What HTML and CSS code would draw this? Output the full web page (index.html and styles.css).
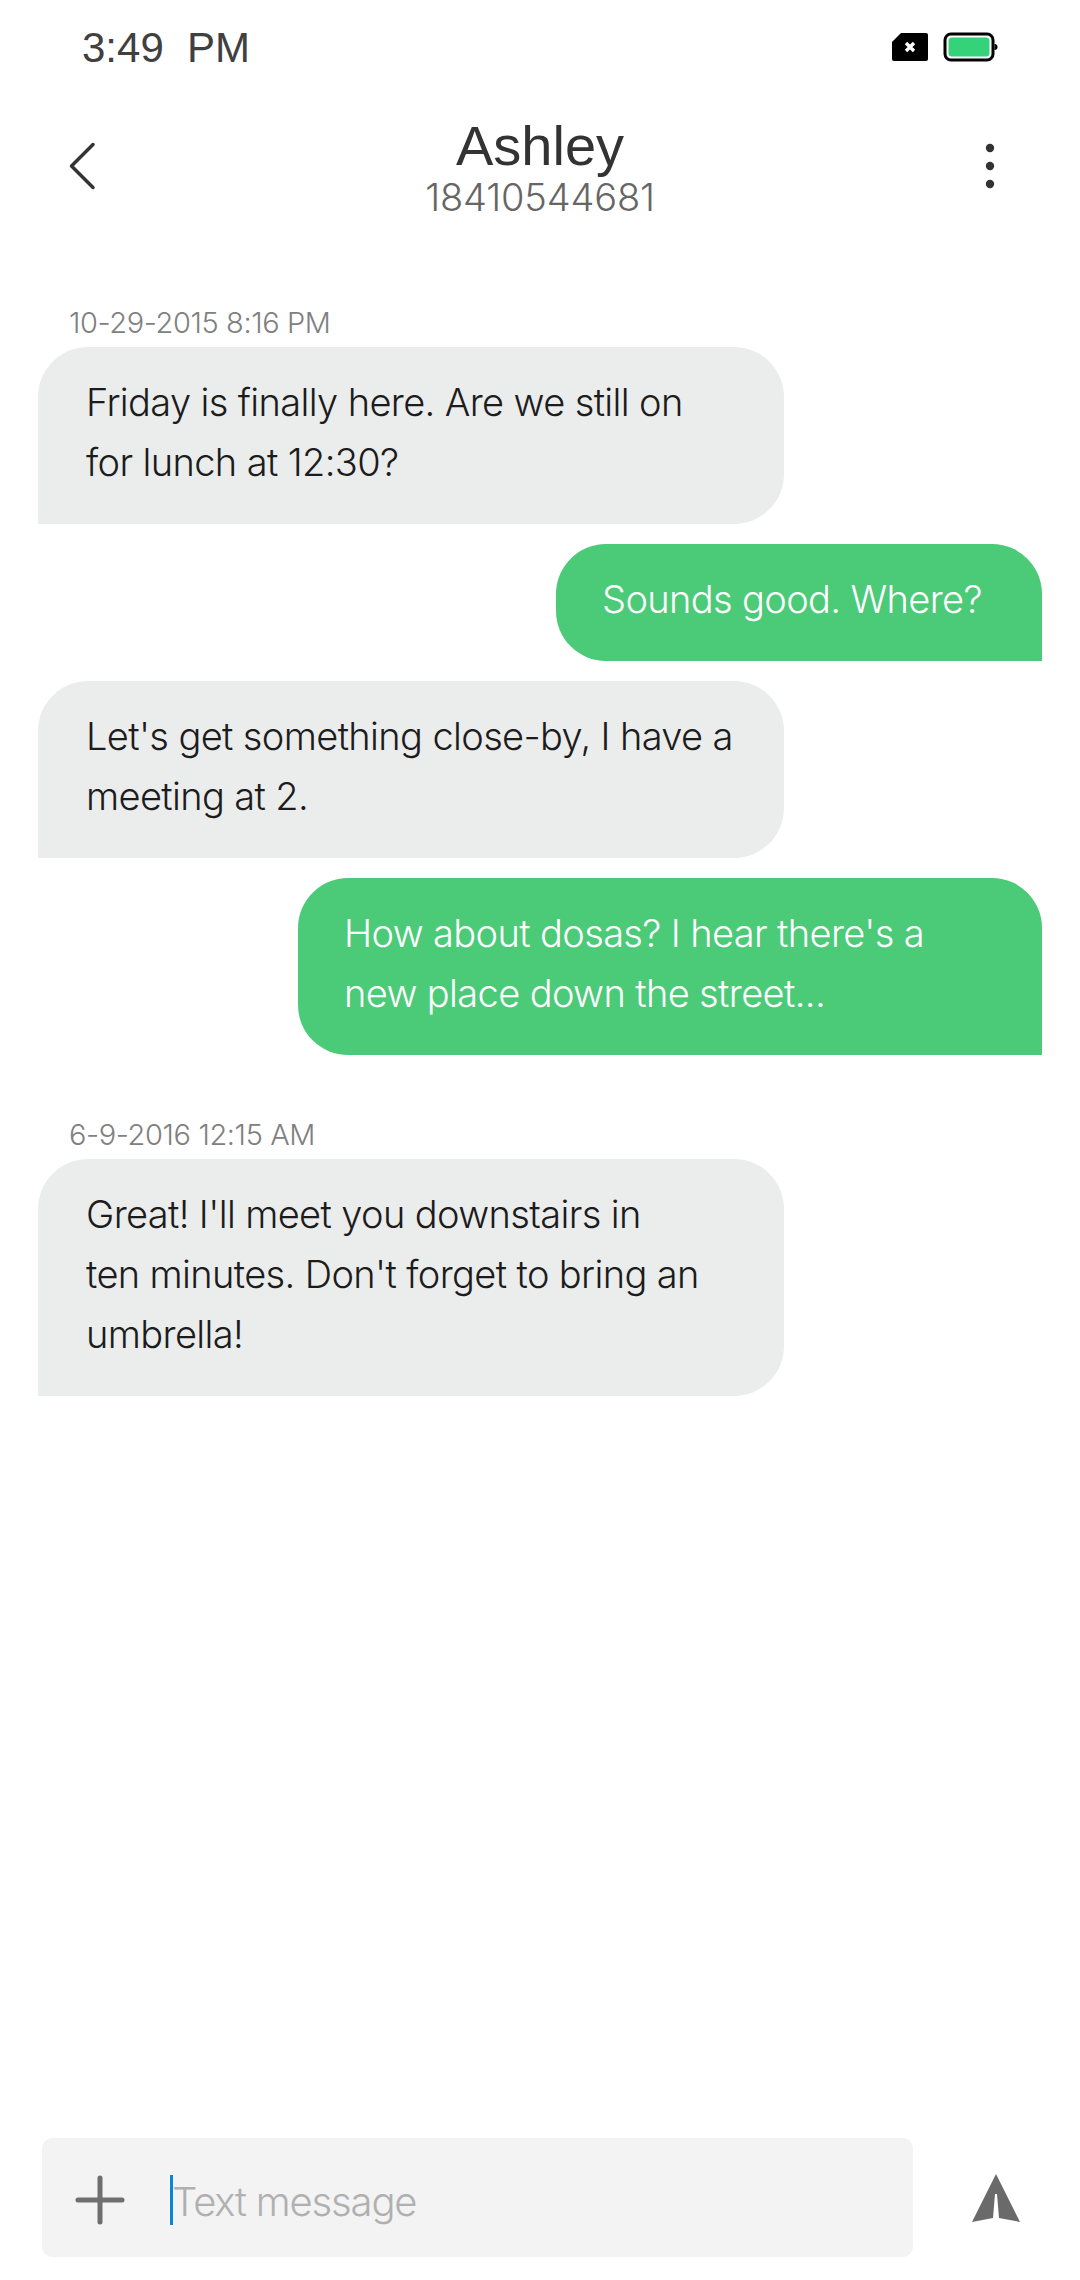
FILE: index.html
```html
<!DOCTYPE html>
<html lang="en">
<head>
<meta charset="utf-8">
<title>Ashley</title>
<link rel="stylesheet" href="styles.css">
</head>
<body>
<div class="screen">
  <div class="status">
    <span class="time">3:49&nbsp; PM</span>
    <div class="status-icons">
      <svg class="sim" width="38" height="30" viewBox="0 0 38 30"><path d="M10 1H35a2 2 0 0 1 2 2V27a2 2 0 0 1-2 2H3a2 2 0 0 1-2-2V10Z" fill="#000"/><path d="M15 11l8 8M23 11l-8 8" stroke="#fff" stroke-width="3.4" fill="none"/></svg>
      <svg class="battery" width="56" height="30" viewBox="0 0 56 30"><rect x="2" y="2" width="48" height="26" rx="6" fill="#fff" stroke="#000" stroke-width="3"/><rect x="5.500" y="5.500" width="41" height="19" rx="3.500" fill="#36d27a"/><path d="M51.500 12a3 3 0 0 1 0 6Z" fill="#000"/></svg>
    </div>
  </div>
  <header class="nav">
    <svg class="back" width="30" height="50" viewBox="0 0 30 50"><path d="M27 3.500 5.500 25 27 46.500" fill="none" stroke="#333" stroke-width="3.500" stroke-linecap="round" stroke-linejoin="round"/></svg>
    <div class="title">
      <div class="name">Ashley</div>
      <div class="number">18410544681</div>
    </div>
    <svg class="more" width="10" height="46" viewBox="0 0 10 46"><circle cx="5" cy="5" r="4.200" fill="#333"/><circle cx="5" cy="23" r="4.200" fill="#333"/><circle cx="5" cy="41" r="4.200" fill="#333"/></svg>
  </header>
  <main class="thread">
    <div class="stamp">10-29-2015 8:16 PM</div>
    <div class="bubble in">Friday is finally here. Are we still on<br>for lunch at 12:30?</div>
    <div class="bubble out short">Sounds good. Where?</div>
    <div class="bubble in">Let's get something close-by, I have a<br>meeting at 2.</div>
    <div class="bubble out">How about dosas? I hear there's a<br>new place down the street...</div>
    <div class="stamp later">6-9-2016 12:15 AM</div>
    <div class="bubble in">Great! I'll meet you downstairs in<br>ten minutes. Don't forget to bring an<br>umbrella!</div>
  </main>
  <footer class="composer">
    <div class="field">
      <svg class="plus" width="50" height="50" viewBox="0 0 50 50"><path d="M25 3V47M3 25H47" stroke="#6e6e6e" stroke-width="5" stroke-linecap="round"/></svg>
      <span class="caret"></span>
      <span class="placeholder">Text message</span>
    </div>
    <svg class="send" width="50" height="50" viewBox="0 0 50 50"><path d="M25 1 49 49 28 45 26 21H24L22 45 1 49Z" fill="#6a6a6a"/></svg>
  </footer>
</div>
</body>
</html>
```
FILE: styles.css
```css
* { box-sizing: border-box; }
html, body { margin: 0; padding: 0; background: #fff; }
.screen {
  width: 1080px;
  height: 2280px;
  display: flex;
  flex-direction: column;
  font-family: Inter, "Liberation Sans", sans-serif;
  font-weight: 300;
  overflow: hidden;
}
.status {
  height: 96px;
  padding: 0 81px 0 82px;
  display: flex;
  align-items: center;
  justify-content: space-between;
}
.time { font-size: 42px; color: #404040; font-family: "Liberation Sans", sans-serif; }
.status-icons { display: flex; align-items: center; gap: 14px; margin-top: -2px; }
.sim, .battery { display: block; }
.nav {
  height: 142px;
  padding: 0 85px 2px;
  display: grid;
  grid-template-columns: 1fr auto 1fr;
  align-items: center;
}
.back, .more { display: block; }
.back { margin-left: -19px; }
.more { justify-self: end; }
.title { text-align: center; }
.name { font-size: 56px; line-height: 62px; color: #333; font-family: "Liberation Sans", sans-serif; }
.number { font-size: 38px; line-height: 40px; letter-spacing: -0.16px; color: #666; }
.thread {
  flex: 1;
  padding: 67px 38px 0;
  display: flex;
  flex-direction: column;
  gap: 20px;
  align-items: flex-start;
}
.stamp {
  font-size: 29px;
  line-height: 36px;
  letter-spacing: -0.39px;
  color: #808080;
  margin: 0 0 -14px 31px;
}
.later { margin-top: 42px; }
.bubble {
  width: 746px;
  padding: 25px 40px 32px 48px;
  font-size: 38px;
  line-height: 60px;
  letter-spacing: -0.63px;
  border-radius: 50px 50px 50px 0;
}
.in { background: #ebecec; color: #1c1c1c; }
.out {
  align-self: flex-end;
  width: 744px;
  background: #4bca78;
  color: #fff;
  border-radius: 50px 50px 0 50px;
  padding-left: 46px;
}
.short { width: 486px; }
.composer {
  height: 142px;
  padding: 0 59px 23px 42px;
  display: flex;
  align-items: center;
  justify-content: space-between;
}
.field {
  width: 871px;
  height: 119px;
  background: #f3f3f3;
  border-radius: 10px;
  display: flex;
  align-items: center;
  padding: 4px 0 0 33px;
}
.plus { display: block; flex: none; margin-right: 45px; }
.caret { width: 3px; height: 50px; background: #0a84d6; flex: none; }
.placeholder { font-size: 40px; letter-spacing: -1.16px; color: #b0b0b0; margin: 4px 0 0 -1px; }
.send { display: block; }
```
